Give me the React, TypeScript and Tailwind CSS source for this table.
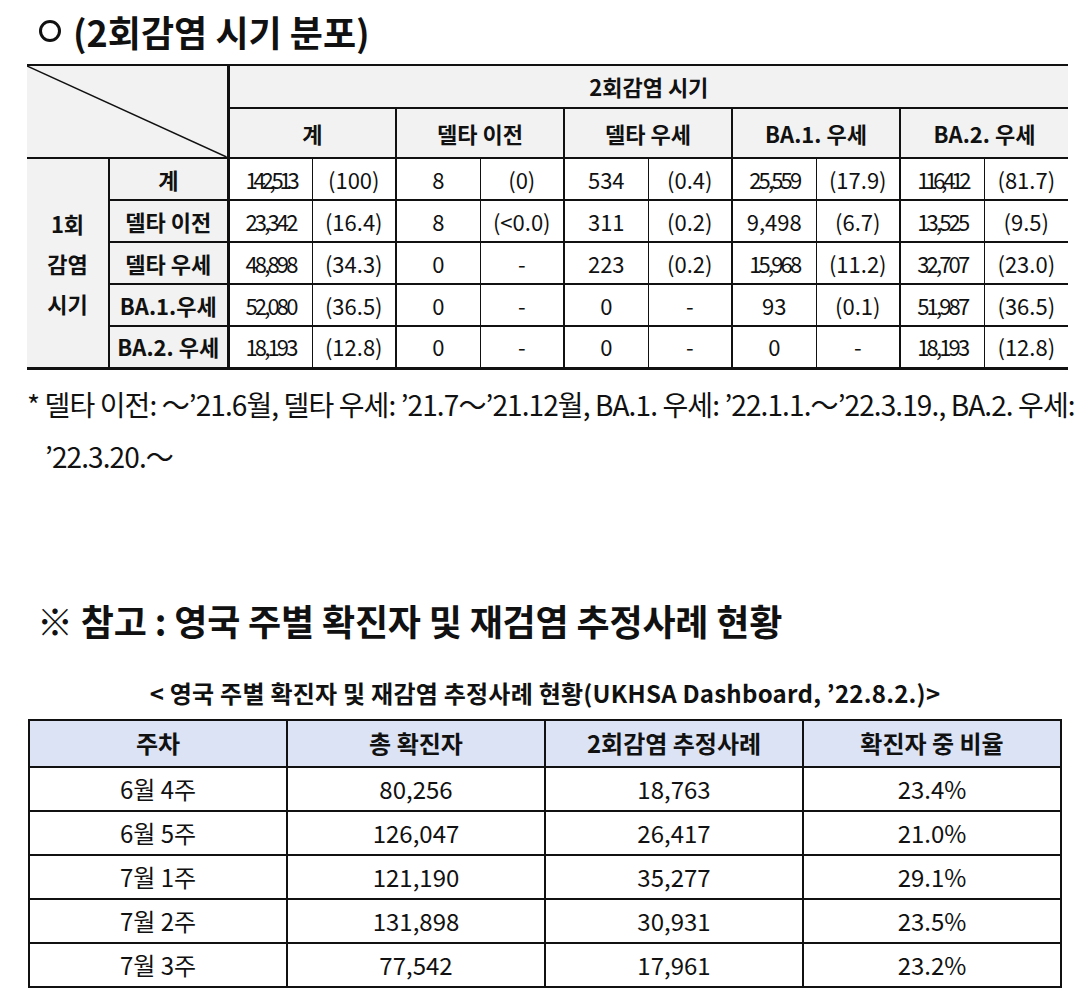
import React from "react";

const FONT = { fontFamily: '"Noto Sans CJK KR", "Noto Sans", sans-serif' };

// 2회감염 시기 분포 (1회 감염 시기 x 2회 감염 시기)
const groups = ["계", "델타 이전", "델타 우세", "BA.1. 우세", "BA.2. 우세"];

const rows = [
    { label: "계", cells: ["142,513", "(100)", "8", "(0)", "534", "(0.4)", "25,559", "(17.9)", "116,412", "(81.7)"] },
    { label: "델타 이전", cells: ["23,342", "(16.4)", "8", "(<0.0)", "311", "(0.2)", "9,498", "(6.7)", "13,525", "(9.5)"] },
    { label: "델타 우세", cells: ["48,898", "(34.3)", "0", "-", "223", "(0.2)", "15,968", "(11.2)", "32,707", "(23.0)"] },
    { label: "BA.1.우세", cells: ["52,080", "(36.5)", "0", "-", "0", "-", "93", "(0.1)", "51,987", "(36.5)"] },
    { label: "BA.2. 우세", cells: ["18,193", "(12.8)", "0", "-", "0", "-", "0", "-", "18,193", "(12.8)"] },
];

const weeks = [
    ["6월 4주", "80,256", "18,763", "23.4%"],
    ["6월 5주", "126,047", "26,417", "21.0%"],
    ["7월 1주", "121,190", "35,277", "29.1%"],
    ["7월 2주", "131,898", "30,931", "23.5%"],
    ["7월 3주", "77,542", "17,961", "23.2%"],
];

// 긴 숫자는 원문처럼 자간을 좁혀서 표시
const squeeze = (v: string) => {
    if (v.startsWith("(")) return "";
    if (v.length >= 7) return "tracking-[-0.19em]";
    if (v.length >= 6) return "tracking-[-0.13em]";
    return "";
};

const DistributionTable = () => (
    <table className="ml-[27px] w-[1041px] table-fixed border-collapse text-[22px] text-[#111]">
        <colgroup>
            <col className="w-[82px]" />
            <col className="w-[119px]" />
            {Array.from({ length: 10 }).map((_, i) => (
                <col key={i} className="w-[84px]" />
            ))}
        </colgroup>
        <thead>
            <tr className="h-[43px]">
                <td
                    rowSpan={2}
                    colSpan={2}
                    className="relative border-t-2 border-b-2 border-r-[3px] border-[#111] bg-[#f2f2f2] p-0"
                >
                    <svg className="absolute inset-0 h-full w-full" viewBox="0 0 100 100" preserveAspectRatio="none">
                        <line x1="0" y1="0" x2="100" y2="100" stroke="#111" strokeWidth="1.5" vectorEffect="non-scaling-stroke" />
                    </svg>
                </td>
                <td colSpan={10} className="border-t-2 border-b-2 border-l-[3px] border-[#111] bg-[#f2f2f2] text-center font-bold">
                    2회감염 시기
                </td>
            </tr>
            <tr className="h-[50px]">
                {groups.map((g, i) => (
                    <td
                        key={g}
                        colSpan={2}
                        className={`border-b-2 border-[#111] bg-[#f2f2f2] text-center font-bold ${
                            i === 0 ? "border-l-[3px]" : "border-l-2"
                        } ${i === groups.length - 1 ? "border-r-0" : "border-r-2"}`}
                    >
                        {g}
                    </td>
                ))}
            </tr>
        </thead>
        <tbody>
            {rows.map((r, ri) => (
                <tr key={r.label} className="h-[42px]">
                    {ri === 0 && (
                        <td
                            rowSpan={5}
                            className="border-r-2 border-b-[3px] border-[#111] bg-[#f2f2f2] text-center font-bold leading-[40px]"
                        >
                            1회
                            <br />
                            감염
                            <br />
                            시기
                        </td>
                    )}
                    <td
                        className={`border-t-2 border-r-[3px] border-l-2 border-[#111] bg-[#f2f2f2] text-center font-bold ${
                            ri === rows.length - 1 ? "border-b-[3px]" : "border-b-2"
                        }`}
                    >
                        {r.label}
                    </td>
                    {r.cells.map((c, ci) => (
                        <td
                            key={ci}
                            className={`whitespace-nowrap border-t-2 border-[#111] bg-white text-center ${
                                ri === rows.length - 1 ? "border-b-[3px]" : "border-b-2"
                            } ${ci % 2 === 0 ? (ci === 0 ? "border-l-[3px] border-r" : "border-l-2 border-r") : "border-l"} ${
                                ci % 2 === 1 ? (ci === 9 ? "border-r-0" : "border-r-2") : ""
                            } ${squeeze(c)}`}
                        >
                            {c}
                        </td>
                    ))}
                </tr>
            ))}
        </tbody>
    </table>
);

const WeeklyTable = () => (
    <table className="ml-[28px] w-[1034px] table-fixed border-collapse text-[24px] text-[#111]">
        <thead>
            <tr className="h-[47px] bg-[#dbe3f4]">
                {["주차", "총 확진자", "2회감염 추정사례", "확진자 중 비율"].map((h) => (
                    <th key={h} className="border-2 border-[#111] text-center font-bold">
                        {h}
                    </th>
                ))}
            </tr>
        </thead>
        <tbody>
            {weeks.map((w) => (
                <tr key={w[0]} className="h-[44px] bg-white">
                    {w.map((c, i) => (
                        <td key={i} className="border-2 border-[#111] text-center">
                            {c}
                        </td>
                    ))}
                </tr>
            ))}
        </tbody>
    </table>
);

export default function App() {
    return (
        <div className="min-h-screen w-[1080px] bg-white text-[#111]" style={FONT}>
            {/* 2회감염 시기 분포 */}
            <h1 className="flex items-center pl-[39px] pt-[11px] text-[36px] font-bold leading-[40px]">
                <span className="mr-[12px] inline-block h-[22px] w-[22px] rounded-full border-[3px] border-[#111]" />
                <span>(2회감염 시기 분포)</span>
            </h1>
            <div className="mt-[13px]">
                <DistributionTable />
            </div>

            {/* 각주 */}
            <div className="mt-[8px] pl-[27px] text-[28px] leading-[52px] tracking-[-0.032em]">
                <p className="whitespace-nowrap">
                    * 델타 이전: ～’21.6월, 델타 우세: ’21.7～’21.12월, BA.1. 우세: ’22.1.1.～’22.3.19., BA.2. 우세:
                </p>
                <p className="pl-[18px]">’22.3.20.～</p>
            </div>

            {/* 영국 참고 */}
            <h2 className="mt-[116px] pl-[37px] text-[36px] font-bold leading-[44px] tracking-[-0.005em]">
                ※ 참고 : 영국 주별 확진자 및 재검염 추정사례 현황
            </h2>
            <p className="mt-[35px] w-[1090px] text-center text-[24px] font-semibold leading-[32px] tracking-[0.01em]">
                &lt; 영국 주별 확진자 및 재감염 추정사례 현황(UKHSA Dashboard, ’22.8.2.)&gt;
            </p>
            <div className="mt-[10px] pb-4">
                <WeeklyTable />
            </div>
        </div>
    );
}
